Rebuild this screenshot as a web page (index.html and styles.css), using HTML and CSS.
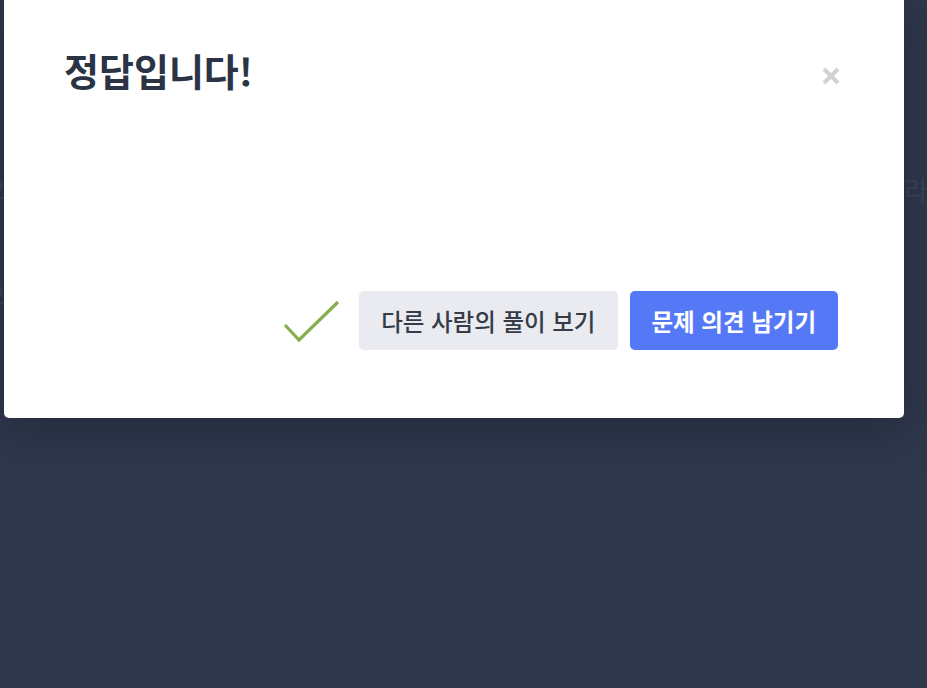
FILE: index.html
```html
<!DOCTYPE html>
<html lang="ko">
<head>
<meta charset="utf-8">
<link rel="stylesheet" href="styles.css">
</head>
<body>
<div class="page">
  <div class="bg-text bg-a">라</div>
  <div class="bg-text bg-b">으</div>
  <div class="bg-text bg-c">으</div>
</div>
<div class="modal">
  <div class="modal-head">
    <h1 class="title">정답입니다!</h1>
    <button class="close" aria-label="닫기">
      <svg width="20" height="20" viewBox="0 0 20 20"><path d="M3 3 L17 17 M17 3 L3 17" stroke="#d1d1d1" stroke-width="4" stroke-linecap="butt"/></svg>
    </button>
  </div>
  <div class="modal-foot">
    <svg class="check" width="58" height="46" viewBox="0 0 58 46"><path d="M3 26 L17 41 L56 3" fill="none" stroke="#86ad4e" stroke-width="3.2"/></svg>
    <button class="btn btn-gray">다른 사람의 풀이 보기</button>
    <button class="btn btn-blue">문제 의견 남기기</button>
  </div>
</div>
</body>
</html>
```
FILE: styles.css
```css
html, body {
  margin: 0;
  padding: 0;
  height: 100%;
  overflow: hidden;
}
body {
  background: #2f374b;
  font-family: "Noto Sans CJK KR", "Noto Sans", sans-serif;
}
.page {
  position: relative;
  height: 100%;
}
.bg-text {
  position: absolute;
  color: #3b4358;
  font-size: 26px;
}
.bg-a { left: 904px; top: 170px; }
.bg-b { left: -18px; top: 170px; }
.bg-c { left: -18px; top: 275px; }
.modal {
  position: absolute;
  left: 4px;
  top: -10px;
  width: 900px;
  height: 428px;
  box-sizing: border-box;
  background: #fff;
  border-radius: 5px;
  box-shadow: 0 12px 40px rgba(20, 24, 38, 0.35);
  padding: 52px 66px 0 60px;
  display: flex;
  flex-direction: column;
}
.modal-head {
  display: flex;
  justify-content: space-between;
  align-items: flex-start;
}
.title {
  margin: 0;
  font-size: 38px;
  font-weight: 700;
  color: #2c3344;
  line-height: 56px;
}
.close {
  border: 0;
  background: none;
  padding: 0;
  margin-top: 24px;
  margin-right: -3px;
  width: 20px;
  height: 20px;
  cursor: pointer;
}
.close svg { display: block; }
.modal-foot {
  margin-top: auto;
  margin-bottom: 68px;
  display: flex;
  justify-content: flex-end;
  align-items: center;
  gap: 12px;
}
.check {
  display: block;
  margin-right: 7px;
  margin-top: 2px;
}
.btn {
  border: 0;
  border-radius: 5px;
  height: 59px;
  padding: 0 22px;
  font-family: "Noto Sans CJK KR", "Noto Sans", sans-serif;
  font-size: 23.5px;
  cursor: pointer;
}
.btn-gray {
  background: #e9ebf0;
  color: #353b47;
  font-weight: 500;
}
.btn-blue {
  background: #5579f6;
  color: #fff;
  font-weight: 700;
}
```
